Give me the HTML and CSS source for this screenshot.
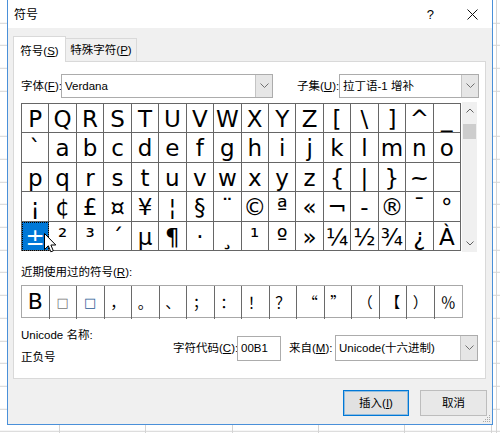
FILE: index.html
```html
<!DOCTYPE html>
<html lang="zh-CN">
<head>
<meta charset="utf-8">
<title>符号</title>
<link rel="stylesheet" href="styles.css">
</head>
<body>
<div class="dialog">
  <div class="titlebar">
    <span class="title">符号</span>
    <span class="help">?</span>
    <svg class="close" width="11" height="11" viewBox="0 0 11 11"><path d="M0.5 0.5 L10.5 10.5 M10.5 0.5 L0.5 10.5" stroke="#111" stroke-width="1" fill="none"/></svg>
  </div>
  <div class="dlg-body">
    <div class="tabs">
      <div class="tab active">符号(<u>S</u>)</div>
      <div class="tab">特殊字符(<u>P</u>)</div>
    </div>
    <div class="panel">
      <div class="font-row">
        <span class="lbl lbl-font">字体(<u>F</u>):</span>
        <div class="combo combo-font">
          <span class="combo-text">Verdana</span>
          <span class="combo-btn"><svg width="9" height="6" viewBox="0 0 9 6"><path d="M0.5 0.5 L4.5 4.5 L8.5 0.5" stroke="#707070" fill="none"/></svg></span>
        </div>
        <span class="lbl lbl-subset">子集(<u>U</u>):</span>
        <div class="combo combo-subset">
          <span class="combo-text">拉丁语-1 增补</span>
          <span class="combo-btn"><svg width="9" height="6" viewBox="0 0 9 6"><path d="M0.5 0.5 L4.5 4.5 L8.5 0.5" stroke="#707070" fill="none"/></svg></span>
        </div>
      </div>

      <div class="map-wrap">
        <div class="charmap">
          <div class="cell">P</div><div class="cell">Q</div><div class="cell">R</div><div class="cell">S</div><div class="cell">T</div><div class="cell">U</div><div class="cell">V</div><div class="cell">W</div><div class="cell">X</div><div class="cell">Y</div><div class="cell">Z</div><div class="cell">[</div><div class="cell">\</div><div class="cell">]</div><div class="cell">^</div><div class="cell">_</div>
          <div class="cell">`</div><div class="cell">a</div><div class="cell">b</div><div class="cell">c</div><div class="cell">d</div><div class="cell">e</div><div class="cell">f</div><div class="cell">g</div><div class="cell">h</div><div class="cell">i</div><div class="cell">j</div><div class="cell">k</div><div class="cell">l</div><div class="cell">m</div><div class="cell">n</div><div class="cell">o</div>
          <div class="cell">p</div><div class="cell">q</div><div class="cell">r</div><div class="cell">s</div><div class="cell">t</div><div class="cell">u</div><div class="cell">v</div><div class="cell">w</div><div class="cell">x</div><div class="cell">y</div><div class="cell">z</div><div class="cell">{</div><div class="cell">|</div><div class="cell">}</div><div class="cell">~</div><div class="cell"></div>
          <div class="cell">¡</div><div class="cell">¢</div><div class="cell">£</div><div class="cell">¤</div><div class="cell">¥</div><div class="cell">¦</div><div class="cell">§</div><div class="cell">¨</div><div class="cell">©</div><div class="cell">ª</div><div class="cell">«</div><div class="cell">¬</div><div class="cell">-</div><div class="cell">®</div><div class="cell">¯</div><div class="cell">°</div>
          <div class="cell sel">±</div><div class="cell">²</div><div class="cell">³</div><div class="cell">´</div><div class="cell">µ</div><div class="cell">¶</div><div class="cell">·</div><div class="cell">¸</div><div class="cell">¹</div><div class="cell">º</div><div class="cell">»</div><div class="cell">¼</div><div class="cell">½</div><div class="cell">¾</div><div class="cell">¿</div><div class="cell">À</div>
        </div>
        <div class="scrollbar">
          <div class="sb-btn"><svg width="8" height="5" viewBox="0 0 8 5"><path d="M0.5 4.5 L4 1 L7.5 4.5" stroke="#606060" fill="none"/></svg></div>
          <div class="sb-track"><div class="sb-thumb"></div></div>
          <div class="sb-btn"><svg width="8" height="5" viewBox="0 0 8 5"><path d="M0.5 0.5 L4 4 L7.5 0.5" stroke="#606060" fill="none"/></svg></div>
        </div>
        <svg class="cursor" width="13" height="21" viewBox="0 0 13 21"><path d="M0.5 0.5 L0.5 16.5 L4.3 12.8 L6.8 18.8 L9.3 17.8 L6.9 12 L11.8 12 Z" fill="#fff" stroke="#000" stroke-width="1" stroke-linejoin="miter"/></svg>
      </div>

      <div class="recent-label">近期使用过的符号(<u>R</u>):</div>
      <div class="recent">
        <div class="rcell big">B</div>
        <div class="rcell box box-gray">□</div>
        <div class="rcell box box-blue">□</div>
        <div class="rcell">，</div>
        <div class="rcell">。</div>
        <div class="rcell">、</div>
        <div class="rcell">；</div>
        <div class="rcell">：</div>
        <div class="rcell">！</div>
        <div class="rcell">？</div>
        <div class="rcell">“</div>
        <div class="rcell">”</div>
        <div class="rcell">（</div>
        <div class="rcell">【</div>
        <div class="rcell">）</div>
        <div class="rcell">％</div>
      </div>

      <div class="info">
        <div class="info-left">
          <div>Unicode 名称:</div>
          <div>正负号</div>
        </div>
        <div class="info-right">
          <span class="lbl lbl-code">字符代码(<u>C</u>):</span>
          <div class="input-code">00B1</div>
          <span class="lbl lbl-from">来自(<u>M</u>):</span>
          <div class="combo combo-from">
            <span class="combo-text">Unicode(十六进制)</span>
            <span class="combo-btn"><svg width="9" height="6" viewBox="0 0 9 6"><path d="M0.5 0.5 L4.5 4.5 L8.5 0.5" stroke="#707070" fill="none"/></svg></span>
          </div>
        </div>
      </div>
    </div>
    <div class="buttons">
      <div class="btn btn-default">插入(<u>I</u>)</div>
      <div class="btn btn-cancel">取消</div>
    </div>
  </div>
  <svg class="grip" width="8" height="8" viewBox="0 0 8 8"><g fill="#a8a8a8"><rect x="6" y="0" width="1" height="1"/><rect x="4" y="2" width="1" height="1"/><rect x="6" y="2" width="1" height="1"/><rect x="2" y="4" width="1" height="1"/><rect x="4" y="4" width="1" height="1"/><rect x="6" y="4" width="1" height="1"/><rect x="0" y="6" width="1" height="1"/><rect x="2" y="6" width="1" height="1"/><rect x="4" y="6" width="1" height="1"/><rect x="6" y="6" width="1" height="1"/></g></svg>
</div>
</body>
</html>
```

FILE: styles.css
```css
html, body {
  margin: 0;
  padding: 0;
}

body {
  width: 500px;
  height: 433px;
  overflow: hidden;
  font-family: "Liberation Sans", "Noto Sans CJK SC", sans-serif;
  font-size: 11.5px;
  color: #000;
  background-color: #fff;
  background-image:
    linear-gradient(to right, transparent 496px, #d4d4d4 496px, #d4d4d4 497px, transparent 497px),
    repeating-linear-gradient(to right, transparent 0, transparent 59px, #d4d4d4 59px, #d4d4d4 60px, transparent 60px, transparent 86.3px),
    repeating-linear-gradient(to bottom, transparent 0, transparent 21.7px, #d4d4d4 21.7px, #d4d4d4 22.7px);
  background-position: 0 0, 0 0, 0 0.8px;
}

.dialog {
  position: relative;
  box-sizing: border-box;
  margin-left: 7px;
  width: 486px;
  height: 425px;
  border: 1px solid #4a90d9;
  border-top: none;
  background: #f0f0f0;
}

.titlebar {
  height: 28px;
  background: #fff;
  display: flex;
  align-items: center;
}

.title {
  padding-left: 6px;
  font-size: 12px;
  line-height: 16px;
  margin-top: 2px;
}

.help {
  margin-left: auto;
  margin-right: 33px;
  font-size: 13px;
  line-height: 16px;
  margin-top: 1px;
}

.close {
  margin-right: 14px;
  margin-top: 1px;
}

.dlg-body {
  padding: 8px 6px 8px 5px;
}

u {
  text-decoration: underline;
  text-underline-offset: 1px;
}

.tabs {
  display: flex;
  align-items: flex-end;
  height: 25px;
}

.tab {
  box-sizing: border-box;
  border: 1px solid #d9d9d9;
  border-bottom: none;
  text-align: center;
  line-height: 20px;
  white-space: nowrap;
}

.tab.active {
  position: relative;
  z-index: 1;
  width: 53px;
  height: 26px;
  margin-bottom: -1px;
  padding-top: 4px;
  background: #fff;
}

.tab:not(.active) {
  width: 71px;
  height: 23px;
  padding-top: 1px;
  border-left: none;
  background: #f0f0f0;
}

.panel {
  box-sizing: border-box;
  height: 318px;
  border: 1px solid #d9d9d9;
  background: #fff;
  padding: 12px 6px 0 7px;
}

.font-row {
  display: flex;
  align-items: center;
  height: 24px;
}

.lbl {
  white-space: nowrap;
  line-height: 16px;
}

.lbl-font {
  width: 40px;
}

.lbl-subset {
  width: 42px;
  margin-left: 24px;
}

.combo {
  box-sizing: border-box;
  display: flex;
  height: 24px;
  border: 1px solid #acacac;
  background: #fff;
}

.combo-font {
  width: 212px;
}

.combo-subset {
  width: 140px;
}

.combo-text {
  flex: 1;
  padding-left: 3px;
  line-height: 22px;
  white-space: nowrap;
  overflow: hidden;
}

.combo-btn {
  width: 16px;
  border-left: 1px solid #c4c4c4;
  background: #e6e6e6;
  display: flex;
  align-items: center;
  justify-content: center;
}

.map-wrap {
  position: relative;
  display: flex;
  margin-top: 4px;
  height: 150px;
}

.charmap {
  box-sizing: border-box;
  margin-top: 1px;
  width: 440px;
  height: 148px;
  display: grid;
  grid-template-columns: repeat(16, minmax(0, 1fr));
  grid-template-rows: repeat(5, minmax(0, 1fr));
  border-left: 1px solid #666;
  border-top: 1px solid #666;
  font-family: "DejaVu Sans", sans-serif;
  font-size: 23px;
}

.cell {
  box-sizing: border-box;
  border-right: 1px solid #666;
  border-bottom: 1px solid #666;
  text-align: center;
  line-height: 28px;
  padding-top: 1px;
  white-space: nowrap;
}

.cell.sel {
  background: #0078d7;
  color: #fff;
  outline: 1px dotted #000;
  outline-offset: -1px;
}

.scrollbar {
  margin-left: 1px;
  width: 15px;
  height: 150px;
  background: #f0f0f0;
  display: flex;
  flex-direction: column;
}

.sb-btn {
  height: 17px;
  display: flex;
  align-items: center;
  justify-content: center;
}

.sb-track {
  flex: 1;
  padding-top: 5px;
}

.sb-thumb {
  margin-left: 1px;
  width: 13px;
  height: 15px;
  background: #cdcdcd;
}

.cursor {
  position: absolute;
  left: 23px;
  top: 131px;
}

.recent-label {
  margin-top: 12px;
  line-height: 17px;
  white-space: nowrap;
}

.recent {
  box-sizing: border-box;
  margin-top: 4px;
  width: 442px;
  height: 33px;
  display: grid;
  grid-template-columns: repeat(16, minmax(0, 1fr));
  border: 1px solid #a8a8a8;
  font-family: "Noto Sans CJK SC", sans-serif;
  font-size: 15px;
}

.rcell {
  border-right: 1px solid #6a6a6a;
  text-align: center;
  line-height: 31px;
  white-space: nowrap;
}

.rcell:last-child {
  border-right: none;
}

.rcell.big {
  font-family: "DejaVu Sans", sans-serif;
  font-size: 22px;
}

.rcell.box {
  font-family: "DejaVu Sans", sans-serif;
  font-size: 13px;
  line-height: 33px;
}

.box-gray {
  color: #777;
}

.box-blue {
  color: #2a5a95;
}

.info {
  display: flex;
  margin-top: 6px;
}

.info-left {
  width: 152px;
  line-height: 22px;
}

.info-right {
  display: flex;
  align-items: center;
  margin-top: 11px;
  height: 26px;
}

.lbl-code {
  width: 64px;
}

.input-code {
  box-sizing: border-box;
  width: 44px;
  height: 25px;
  border: 1px solid #acacac;
  padding-left: 3px;
  line-height: 23px;
}

.lbl-from {
  width: 46px;
  margin-left: 8px;
}

.combo-from {
  width: 143px;
  height: 26px;
}

.combo-from .combo-text {
  line-height: 24px;
}

.buttons {
  display: flex;
  justify-content: flex-end;
  gap: 11px;
  margin-top: 11px;
  margin-right: -1px;
}

.btn {
  box-sizing: border-box;
  height: 26px;
  border: 1px solid #adadad;
  background: #e1e1e1;
  text-align: center;
  line-height: 24px;
}

.btn-default {
  width: 66px;
  border-color: #0078d7;
  box-shadow: inset 0 0 0 1px rgba(0, 120, 215, 0.35);
}

.btn-cancel {
  width: 67px;
  background: #e8e8e8;
  border-color: #bdbdbd;
}

.grip {
  position: absolute;
  right: 1px;
  bottom: 1px;
}
```
